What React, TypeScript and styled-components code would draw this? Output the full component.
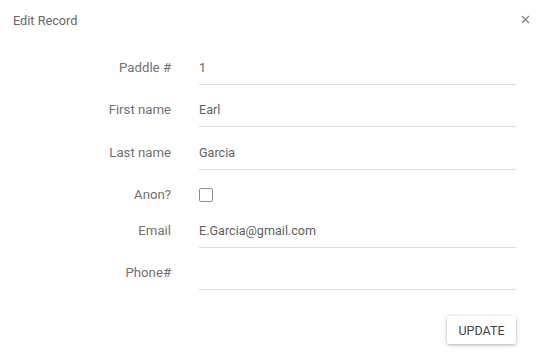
import React, { useState } from 'react';
import styled, { createGlobalStyle } from 'styled-components';

const GlobalStyle = createGlobalStyle`
  html, body {
    margin: 0;
    padding: 0;
    background: #ffffff;
  }
  body {
    font-family: Roboto, "Liberation Sans", Arial, sans-serif;
  }
`

type Field = {
  label: string
  value: string
  kind: 'text' | 'checkbox'
}

const fields: Field[] = [
  { label: 'Paddle #', value: '1', kind: 'text' },
  { label: 'First name', value: 'Earl', kind: 'text' },
  { label: 'Last name', value: 'Garcia', kind: 'text' },
  { label: 'Anon?', value: '', kind: 'checkbox' },
  { label: 'Email', value: 'E.Garcia@gmail.com', kind: 'text' },
  { label: 'Phone#', value: '', kind: 'text' },
]

const App: React.FC = () => {
  const [values, setValues] = useState<Field[]>(fields)
  const [anon, setAnon] = useState<boolean>(false)

  const update = (index: number, value: string) => {
    setValues(values.map((f, i) => (i === index ? { ...f, value } : f)))
  }

  return (
    <Dialog>
      <GlobalStyle />
      <Header>
        <Title>Edit Record</Title>
        <CloseButton aria-label="close">
          <svg width="9" height="9" viewBox="0 0 9 9">
            <path d="M1 1L8 8M8 1L1 8" stroke="#808080" strokeWidth="1.2" />
          </svg>
        </CloseButton>
      </Header>
      <Form>
        {values.map((f, i) => (
          <Row key={f.label} compact={f.kind === 'checkbox'}>
            <Label compact={f.kind === 'checkbox'}>{f.label}</Label>
            {f.kind === 'text' ? (
              <TextInput value={f.value} onChange={(e) => update(i, e.target.value)} />
            ) : (
              <CheckCell>
                <Checkbox type="checkbox" checked={anon} onChange={() => setAnon(!anon)} />
              </CheckCell>
            )}
          </Row>
        ))}
      </Form>
      <Footer>
        <UpdateButton>Update</UpdateButton>
      </Footer>
    </Dialog>
  );
}

const Dialog = styled.div`
  width: 544px;
  height: 358px;
  box-sizing: border-box;
  display: flex;
  flex-direction: column;
`

const Header = styled.div`
  display: flex;
  align-items: center;
  justify-content: space-between;
  height: 40px;
  padding: 0 14px 0 13px;
`

const Title = styled.h2`
  margin: 0;
  font-size: 12.7px;
  font-weight: 400;
  color: #666666;
`

const CloseButton = styled.button`
  border: none;
  background: none;
  padding: 0;
  width: 9px;
  height: 9px;
  display: flex;
  margin-top: -2px;
`

const Form = styled.div`
  display: flex;
  flex-direction: column;
  padding: 3px 28px 0 0;
`

const Row = styled.div<{ compact?: boolean }>`
  display: grid;
  grid-template-columns: 171px 1fr;
  column-gap: 28px;
  align-items: ${({ compact }) => (compact ? 'start' : 'end')};
  height: ${({ compact }) => (compact ? '36px' : '42px')};
  &:nth-child(3) {
    height: 43px;
  }
`

const Label = styled.label<{ compact?: boolean }>`
  text-align: right;
  font-size: 13.2px;
  color: #707070;
  line-height: ${({ compact }) => (compact ? '16px' : '34px')};
  height: ${({ compact }) => (compact ? '16px' : '34px')};
  margin-top: ${({ compact }) => (compact ? '17px' : '0')};
`

const TextInput = styled.input`
  box-sizing: border-box;
  height: 35px;
  border: none;
  border-bottom: 1px solid #dddddd;
  outline: none;
  padding: 0;
  font-family: inherit;
  font-size: 12.6px;
  color: #5f5f5f;
  background: transparent;
`

const CheckCell = styled.div`
  display: flex;
  padding-top: 18px;
`

const Checkbox = styled.input`
  appearance: none;
  margin: 0;
  width: 12px;
  height: 12px;
  box-sizing: content-box;
  border: 1px solid #8f8f8f;
  border-radius: 2px;
  background: #ffffff;
  &:checked {
    background: #555555;
  }
`

const Footer = styled.div`
  display: flex;
  justify-content: flex-end;
  padding: 26px 28px 0 0;
`

const UpdateButton = styled.button`
  height: 28px;
  width: 69px;
  border: none;
  border-radius: 2px;
  background: #ffffff;
  font-family: inherit;
  font-size: 12.5px;
  text-transform: uppercase;
  color: #444444;
  box-shadow: 0 1px 4px rgba(0, 0, 0, 0.22), 0 1px 2px rgba(0, 0, 0, 0.12);
  cursor: pointer;
`

export default App;
